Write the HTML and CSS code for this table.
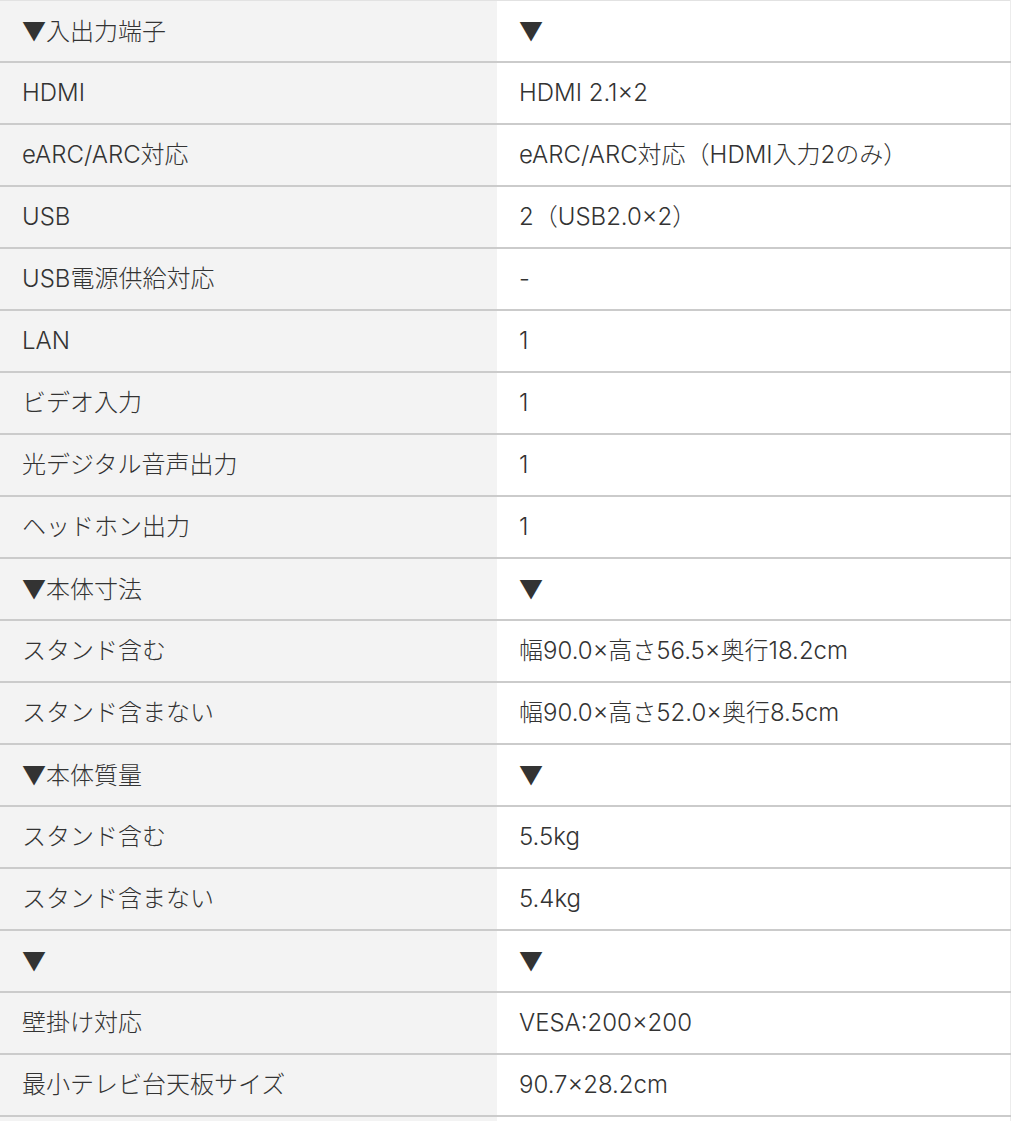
FILE: index.html
```html
<!DOCTYPE html>
<html lang="ja">
<head>
<meta charset="utf-8">
<link rel="stylesheet" href="styles.css">
</head>
<body>
<table class="spec">
<tbody>
<tr><th><span class="mark">▼</span>入出力端子</th><td><span class="mark">▼</span></td></tr>
<tr><th>HDMI</th><td>HDMI 2.1×2</td></tr>
<tr><th>eARC/ARC対応</th><td>eARC/ARC対応（HDMI入力2のみ）</td></tr>
<tr><th>USB</th><td>2（USB2.0×2）</td></tr>
<tr><th>USB電源供給対応</th><td>-</td></tr>
<tr><th>LAN</th><td>1</td></tr>
<tr><th>ビデオ入力</th><td>1</td></tr>
<tr><th>光デジタル音声出力</th><td>1</td></tr>
<tr><th>ヘッドホン出力</th><td>1</td></tr>
<tr><th><span class="mark">▼</span>本体寸法</th><td><span class="mark">▼</span></td></tr>
<tr><th>スタンド含む</th><td>幅90.0×高さ56.5×奥行18.2cm</td></tr>
<tr><th>スタンド含まない</th><td>幅90.0×高さ52.0×奥行8.5cm</td></tr>
<tr><th><span class="mark">▼</span>本体質量</th><td><span class="mark">▼</span></td></tr>
<tr><th>スタンド含む</th><td>5.5kg</td></tr>
<tr><th>スタンド含まない</th><td>5.4kg</td></tr>
<tr><th><span class="mark">▼</span></th><td><span class="mark">▼</span></td></tr>
<tr><th>壁掛け対応</th><td>VESA:200×200</td></tr>
<tr><th>最小テレビ台天板サイズ</th><td>90.7×28.2cm</td></tr>
<tr><th>&nbsp;</th><td>&nbsp;</td></tr>
</tbody>
</table>
</body>
</html>
```
FILE: styles.css
```css
html, body {
  margin: 0;
  padding: 0;
  background: #ffffff;
}
.spec {
  width: 1011px;
  border-collapse: collapse;
  border-top: 1px solid #e2e2e2;
  font-family: "Inter", "Noto Sans CJK JP", sans-serif;
  font-size: 24px;
  font-weight: 300;
  color: #333333;
  table-layout: fixed;
}
.spec th,
.spec td {
  height: 60px;
  padding: 0 22px;
  text-align: left;
  font-weight: 300;
  vertical-align: middle;
  border-bottom: 2px solid #cbcbcb;
  line-height: 1.2;
  white-space: nowrap;
}
.spec th {
  width: 453px;
  background: #f3f3f3;
}
.spec td {
  background: #ffffff;
  border-right: 1px solid #ececec;
}
.mark {
  font-family: "Noto Sans CJK JP", sans-serif;
  font-weight: 400;
}
```
